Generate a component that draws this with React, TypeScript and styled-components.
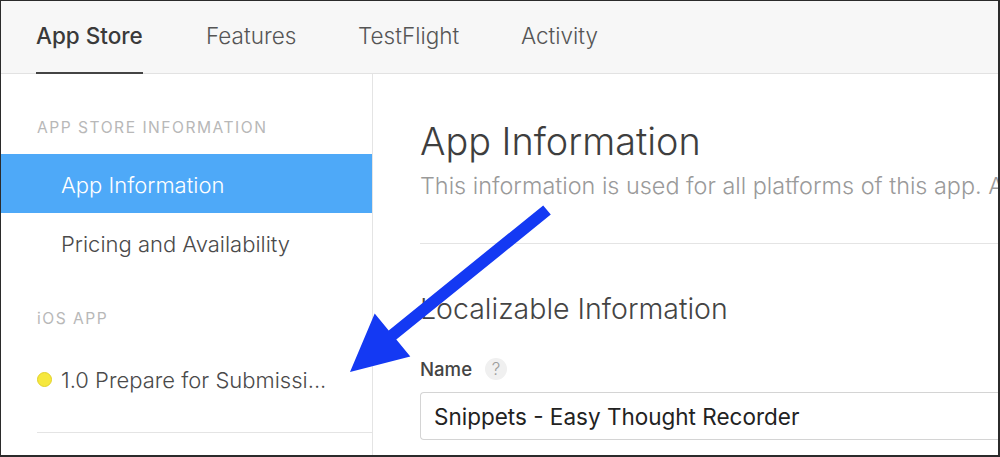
import React from "react";
import styled, { createGlobalStyle } from "styled-components";

const Global = createGlobalStyle`
  html, body { margin: 0; padding: 0; background: #fff; }
  * { box-sizing: border-box; }
  body { font-family: Inter, Roboto, "Liberation Sans", sans-serif; }
`;

const Frame = styled.div`
  position: relative;
  width: 1000px;
  height: 457px;
  overflow: hidden;
  border: 1px solid #2b2b2b;
  border-right-width: 2px;
  border-bottom-width: 2px;
  display: flex;
  flex-direction: column;
  background: #fff;
`;

const TopBar = styled.nav`
  height: 73px;
  flex: none;
  background: #f7f7f7;
  border-bottom: 1px solid #e2e2e2;
  display: flex;
  align-items: stretch;
  padding-left: 35px;
`;

const Tab = styled.div<{ $active?: boolean; $w: number }>`
  width: ${(p) => p.$w}px;
  display: flex;
  align-items: center;
  font-size: 22.5px;
  font-weight: ${(p) => (p.$active ? 500 : 300)};
  color: ${(p) => (p.$active ? "#3a3a3a" : "#555")};
  span {
    position: relative;
    height: 100%;
    display: flex;
    align-items: center;
    padding-bottom: 4px;
  }
  span::after {
    content: "";
    display: ${(p) => (p.$active ? "block" : "none")};
    position: absolute;
    left: 0;
    right: 0;
    bottom: -1px;
    height: 2px;
    background: #444;
  }
`;

const Body = styled.div`
  flex: 1;
  display: grid;
  grid-template-columns: 372px 1fr;
  min-height: 0;
`;

const Sidebar = styled.aside`
  border-right: 1px solid #e4e4e4;
  display: flex;
  flex-direction: column;
  padding-top: 44px;
`;

const SectionLabel = styled.div<{ $mt?: number }>`
  margin-top: ${(p) => p.$mt ?? 0}px;
  padding-left: 36px;
  font-size: 15.6px;
  letter-spacing: 1.5px;
  color: #b8b8b8;
  height: 20px;
  line-height: 20px;
`;

const NavItem = styled.div<{ $selected?: boolean }>`
  height: 59px;
  display: flex;
  align-items: center;
  padding-left: 36px;
  padding-top: 2px;
  font-size: 22px;
  font-weight: 300;
  color: ${(p) => (p.$selected ? "#fff" : "#4a4a4a")};
  background: ${(p) => (p.$selected ? "#4ea9f8" : "transparent")};
  white-space: nowrap;
`;

const Dot = styled.span`
  width: 15px;
  height: 15px;
  border-radius: 50%;
  background: #f6e83e;
  border: 1px solid #e2d22a;
  margin-right: 9px;
  flex: none;
`;

const Indent = styled.span`
  width: 24px;
  flex: none;
`;

const SideRule = styled.div`
  margin: 24px 0 0 36px;
  height: 1px;
  background: #e4e4e4;
`;

const Main = styled.main`
  padding-left: 47px;
  display: flex;
  flex-direction: column;
  min-width: 0;
`;

const Heading = styled.h1`
  margin: 44px 0 0;
  font-size: 37.8px;
  font-weight: 300;
  color: #3e3e3e;
  line-height: 46px;
  white-space: nowrap;
`;

const Sub = styled.p`
  margin: 7px 0 0;
  font-size: 23.4px;
  font-weight: 300;
  color: #9a9a9a;
  line-height: 30px;
  white-space: nowrap;
`;

const Rule = styled.div`
  height: 1px;
  background: #e4e4e4;
  margin-top: 42px;
`;

const SubHeading = styled.h2`
  margin: 47px 0 0;
  font-size: 28.5px;
  font-weight: 300;
  color: #444;
  line-height: 36px;
  white-space: nowrap;
`;

const FieldLabel = styled.div`
  margin-top: 30px;
  display: flex;
  align-items: center;
  gap: 13px;
  font-size: 18.6px;
  font-weight: 500;
  color: #444;
  height: 24px;
`;

const Help = styled.span`
  width: 22px;
  height: 22px;
  border-radius: 50%;
  background: #f0f0f0;
  color: #9c9c9c;
  font-size: 17px;
  font-weight: 300;
  display: flex;
  align-items: center;
  justify-content: center;
`;

const Input = styled.div`
  margin-top: 11px;
  height: 48px;
  border: 1px solid #d4d4d4;
  border-right: none;
  border-radius: 4px 0 0 4px;
  display: flex;
  align-items: center;
  padding-left: 13px;
  font-size: 22.5px;
  color: #222;
  white-space: nowrap;
`;

const Overlay = styled.svg`
  position: absolute;
  left: -1px;
  top: -1px;
  pointer-events: none;
`;

export default function App() {
  return (
    <>
      <Global />
      <Frame>
        <TopBar>
          <Tab $active $w={170}><span>App Store</span></Tab>
          <Tab $w={152}><span>Features</span></Tab>
          <Tab $w={163}><span>TestFlight</span></Tab>
          <Tab $w={120}><span>Activity</span></Tab>
        </TopBar>
        <Body>
          <Sidebar>
            <SectionLabel>APP STORE INFORMATION</SectionLabel>
            <NavItem $selected style={{ marginTop: 16 }}><Indent />App Information</NavItem>
            <NavItem><Indent />Pricing and Availability</NavItem>
            <SectionLabel $mt={37}>iOS APP</SectionLabel>
            <NavItem style={{ marginTop: 20 }}><Dot />1.0 Prepare for Submissi...</NavItem>
            <SideRule />
          </Sidebar>
          <Main>
            <Heading>App Information</Heading>
            <Sub>This information is used for all platforms of this app. All changes will be released with your next app version.</Sub>
            <Rule />
            <SubHeading>Localizable Information</SubHeading>
            <FieldLabel>Name <Help>?</Help></FieldLabel>
            <Input>Snippets - Easy Thought Recorder</Input>
          </Main>
        </Body>
        <Overlay width="1000" height="457" viewBox="0 0 1000 457">
          <polygon
            fill="#1439f3"
            points="543.2,205.4 388.7,330.4 374.7,313.4 350,372 410.3,356.6 396.3,339.6 550.8,214.6"
          />
        </Overlay>
      </Frame>
    </>
  );
}
